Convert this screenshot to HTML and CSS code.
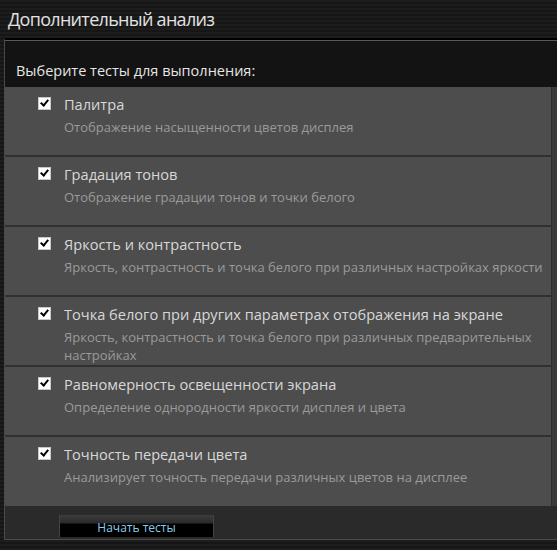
FILE: index.html
```html
<!DOCTYPE html>
<html>
	<head>
		<meta charset="UTF-8">
		<title>Дополнительный анализ</title>
		<link rel="stylesheet" href="styles.css">
	</head>
	<body>
		<div class="title">Дополнительный анализ</div>
		<div class="dialog">
			<div class="dialog-head">Выберите тесты для выполнения:</div>
			<div class="list-wrap">
				<div class="list">
					<div class="row">
						<span class="check"></span>
						<div class="text">
							<div class="name">Палитра</div>
							<div class="desc">Отображение насыщенности цветов дисплея</div>
						</div>
					</div>
					<div class="row">
						<span class="check"></span>
						<div class="text">
							<div class="name">Градация тонов</div>
							<div class="desc">Отображение градации тонов и точки белого</div>
						</div>
					</div>
					<div class="row">
						<span class="check"></span>
						<div class="text">
							<div class="name">Яркость и контрастность</div>
							<div class="desc">Яркость, контрастность и точка белого при различных настройках яркости</div>
						</div>
					</div>
					<div class="row">
						<span class="check"></span>
						<div class="text">
							<div class="name">Точка белого при других параметрах отображения на экране</div>
							<div class="desc">Яркость, контрастность и точка белого при различных предварительных настройках</div>
						</div>
					</div>
					<div class="row">
						<span class="check"></span>
						<div class="text">
							<div class="name">Равномерность освещенности экрана</div>
							<div class="desc">Определение однородности яркости дисплея и цвета</div>
						</div>
					</div>
					<div class="row last">
						<span class="check"></span>
						<div class="text">
							<div class="name">Точность передачи цвета</div>
							<div class="desc">Анализирует точность передачи различных цветов на дисплее</div>
						</div>
					</div>
				</div>
				<div class="trough"></div>
			</div>
			<div class="footer">
				<div class="btn">Начать тесты</div>
			</div>
		</div>
	</body>
</html>
```

FILE: styles.css
```css
html,
body {
	margin: 0;
	height: 100%;
	overflow: hidden;
}

body {
	font-family: "Open Sans", "Noto Sans", sans-serif;
	background: repeating-linear-gradient(#1d1d1d 0px, #1d1d1d 2px, #161616 2px, #161616 4px);
}

.title {
	height: 38px;
	line-height: 38px;
	padding-left: 8px;
	font-size: 18px;
	letter-spacing: -0.7px;
	color: #e2e2e2;
}

.dialog {
	margin-left: 4px;
	width: 570px;
	border-top: 2px solid #000;
	border-left: 1px solid #4a4a4a;
	border-bottom: 1px solid #4a4a4a;
	box-shadow: inset 0 1px 0 #5a5a5a;
	background: #131313;
}

.dialog-head {
	height: 47px;
	box-sizing: border-box;
	padding: 0 0 7px 11px;
	display: flex;
	align-items: flex-end;
	font-size: 14.5px;
	line-height: 18px;
	color: #e6e6e6;
}

.list-wrap {
	display: flex;
}

.list {
	width: 546px;
	background: #4d4d4d;
	border-right: 1px solid #2e2e2e;
}

.row {
	height: 68px;
	border-bottom: 2px solid #303030;
	display: flex;
	align-items: flex-start;
	padding-left: 33px;
}

.row.last {
	height: 69px;
	border-bottom: none;
}

.check {
	flex: none;
	width: 11px;
	height: 11px;
	margin-top: 10px;
	margin-right: 13px;
	background: #fff;
	border: 1px solid #c8c8c8;
	position: relative;
}

.check::after {
	content: "";
	position: absolute;
	left: 3px;
	top: 0px;
	width: 3px;
	height: 6px;
	border-right: 2px solid #000;
	border-bottom: 2px solid #000;
	transform: rotate(40deg);
}

.text {
	padding-top: 7px;
}

.name {
	font-size: 14.6px;
	line-height: 20px;
	color: #d8d8d8;
}

.desc {
	margin-top: 4px;
	font-size: 13px;
	line-height: 18px;
	color: #9a9a9a;
}

.trough {
	flex: 1;
	background: #3a3a3a;
}

.footer {
	height: 33px;
	background: #2a2a2a;
	padding-left: 54px;
	padding-top: 9px;
	box-sizing: border-box;
}

.btn {
	width: 155px;
	height: 22px;
	box-sizing: border-box;
	padding-top: 3px;
	text-align: center;
	font-size: 12px;
	line-height: 20px;
	color: #8ccbe8;
	background: linear-gradient(#3c3c3c 0px, #2a2a2a 8px, #000 9px, #000 100%);
	border-left: 1px solid #444;
	border-right: 1px solid #444;
}
```
